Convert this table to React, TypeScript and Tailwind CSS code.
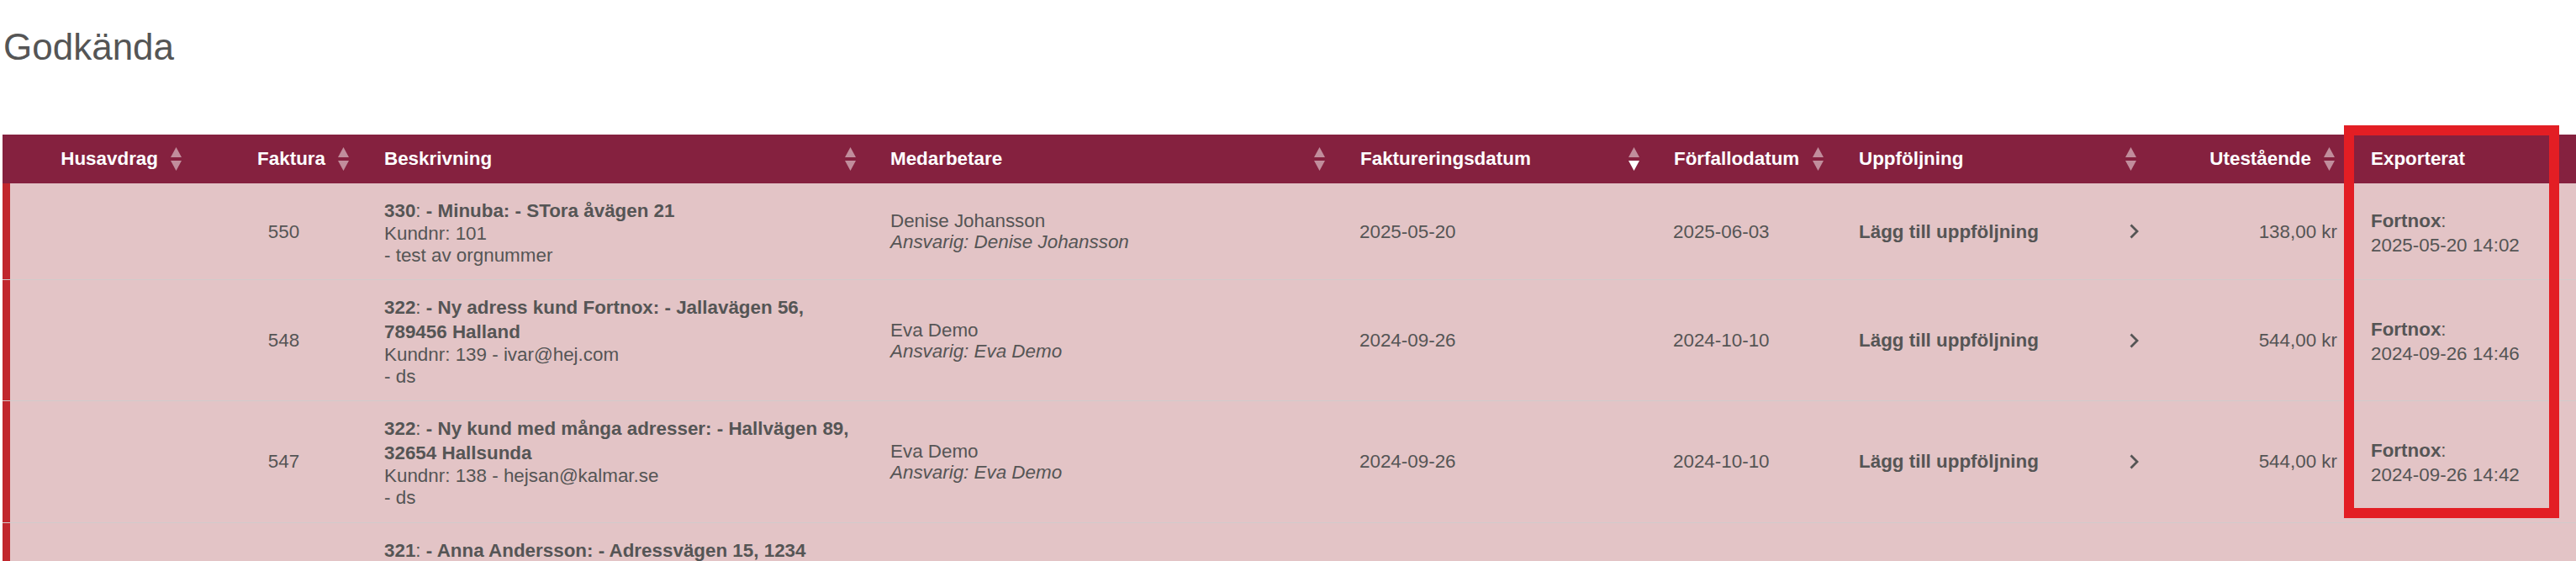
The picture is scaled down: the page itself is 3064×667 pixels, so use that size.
import React from 'react'

const cols = 'grid grid-cols-[235px_199px_603px_558px_374px_219px_372px_236px_1fr]'

interface Row {
  faktura: string
  nr: string
  desc: string[]
  extra: string[]
  med?: string
  ansv?: string
  fdat?: string
  ffdat?: string
  belopp?: string
  exp?: string
}

const rows: Row[] = [
  {
    faktura: '550',
    nr: '330',
    desc: ['- Minuba: - STora åvägen 21'],
    extra: ['Kundnr: 101', '- test av orgnummer'],
    med: 'Denise Johansson',
    ansv: 'Denise Johansson',
    fdat: '2025-05-20',
    ffdat: '2025-06-03',
    belopp: '138,00 kr',
    exp: '2025-05-20 14:02',
  },
  {
    faktura: '548',
    nr: '322',
    desc: ['- Ny adress kund Fortnox: - Jallavägen 56,', '789456 Halland'],
    extra: ['Kundnr: 139 - ivar@hej.com', '- ds'],
    med: 'Eva Demo',
    ansv: 'Eva Demo',
    fdat: '2024-09-26',
    ffdat: '2024-10-10',
    belopp: '544,00 kr',
    exp: '2024-09-26 14:46',
  },
  {
    faktura: '547',
    nr: '322',
    desc: ['- Ny kund med många adresser: - Hallvägen 89,', '32654 Hallsunda'],
    extra: ['Kundnr: 138 - hejsan@kalmar.se', '- ds'],
    med: 'Eva Demo',
    ansv: 'Eva Demo',
    fdat: '2024-09-26',
    ffdat: '2024-10-10',
    belopp: '544,00 kr',
    exp: '2024-09-26 14:42',
  },
  {
    faktura: '',
    nr: '321',
    desc: ['- Anna Andersson: - Adressvägen 15, 1234'],
    extra: [],
  },
]

function SortIcon({ desc }: { desc?: boolean }) {
  return (
    <svg width="13" height="28" viewBox="0 0 13 28" className="shrink-0">
      <polygon points="6.5,0 13,12 0,12" fill="#c18d9c" />
      <polygon points="0,16 13,16 6.5,28" fill={desc ? '#ffffff' : '#c18d9c'} />
    </svg>
  )
}

function Chevron() {
  return (
    <svg width="11" height="18" viewBox="0 0 11 18" fill="none" stroke="#555555" strokeWidth="2.8">
      <path d="M1.5 1.5 L9 9 L1.5 16.5" />
    </svg>
  )
}

export default function App() {
  return (
    <div className="relative w-[3064px] h-[667px] overflow-hidden bg-white font-['Liberation_Sans',Arial,sans-serif] text-[#555555]">
      <h1 className="mt-[31px] ml-[4px] text-[44px] leading-[50px] font-normal text-[#555555]">Godkända</h1>

      <div className="mt-[79px] ml-[3px] text-[22.4px]">
        {/* header */}
        <div className={`${cols} h-[58px] bg-[#85213f] text-white font-bold items-center`}>
          <div className="flex items-center justify-end gap-[15px] pr-[22px]">
            <span>Husavdrag</span>
            <SortIcon />
          </div>
          <div className="flex items-center justify-end gap-[15px] pr-[22px]">
            <span>Faktura</span>
            <SortIcon />
          </div>
          <div className="flex items-center justify-between pl-[20px] pr-[22px]">
            <span>Beskrivning</span>
            <SortIcon />
          </div>
          <div className="flex items-center justify-between pl-[19px] pr-[22px]">
            <span>Medarbetare</span>
            <SortIcon />
          </div>
          <div className="flex items-center justify-between pl-[20px] pr-[22px]">
            <span>Faktureringsdatum</span>
            <SortIcon desc />
          </div>
          <div className="flex items-center justify-between pl-[19px] pr-[22px]">
            <span>Förfallodatum</span>
            <SortIcon />
          </div>
          <div className="flex items-center justify-between pl-[20px] pr-[22px]">
            <span>Uppföljning</span>
            <SortIcon />
          </div>
          <div className="flex items-center justify-end gap-[15px] pr-[22px]">
            <span>Utestående</span>
            <SortIcon />
          </div>
          <div className="pl-[21px]">Exporterat</div>
        </div>

        {/* rows */}
        {rows.map((r, i) => (
          <div key={i} className={`${cols} items-center bg-[#e3c4c6] border-b border-[#d2cbcb]`}>
            <div className="self-stretch border-l-[9px] border-[#c1272d]" />
            <div className="text-center leading-[25px]">{r.faktura}</div>
            <div className="pt-[18px] pb-[16px] pl-[20px] pr-[10px]">
              {r.desc.map((d, j) => (
                <div key={j} className="font-bold leading-[29px] whitespace-nowrap">
                  {j === 0 && (
                    <>
                      {r.nr}
                      <span className="font-normal">:</span>{' '}
                    </>
                  )}
                  {d}
                </div>
              ))}
              {r.extra.map((e, j) => (
                <div key={j} className="leading-[25.6px]">{e}</div>
              ))}
            </div>
            <div className="pl-[19px] leading-[25px]">
              {r.med && (
                <>
                  <div>{r.med}</div>
                  <div className="italic">Ansvarig: {r.ansv}</div>
                </>
              )}
            </div>
            <div className="pl-[19px] leading-[25px]">{r.fdat}</div>
            <div className="pl-[18px] leading-[25px]">{r.ffdat}</div>
            <div className="flex items-center justify-between pl-[20px] pr-[19px]">
              {r.med && (
                <>
                  <span className="font-bold leading-[25px]">Lägg till uppföljning</span>
                  <Chevron />
                </>
              )}
            </div>
            <div className="text-right pr-[19px] leading-[25px]">{r.belopp}</div>
            <div className="pl-[21px]">
              {r.exp && (
                <>
                  <div className="leading-[32px]">
                    <span className="font-bold">Fortnox</span>:
                  </div>
                  <div className="leading-[25px]">{r.exp}</div>
                </>
              )}
            </div>
          </div>
        ))}
      </div>

      {/* highlight around the export column */}
      <div className="absolute left-[2788px] top-[149px] w-[256px] h-[467px] border-[12px] border-[#e31e24]" />
    </div>
  )
}
